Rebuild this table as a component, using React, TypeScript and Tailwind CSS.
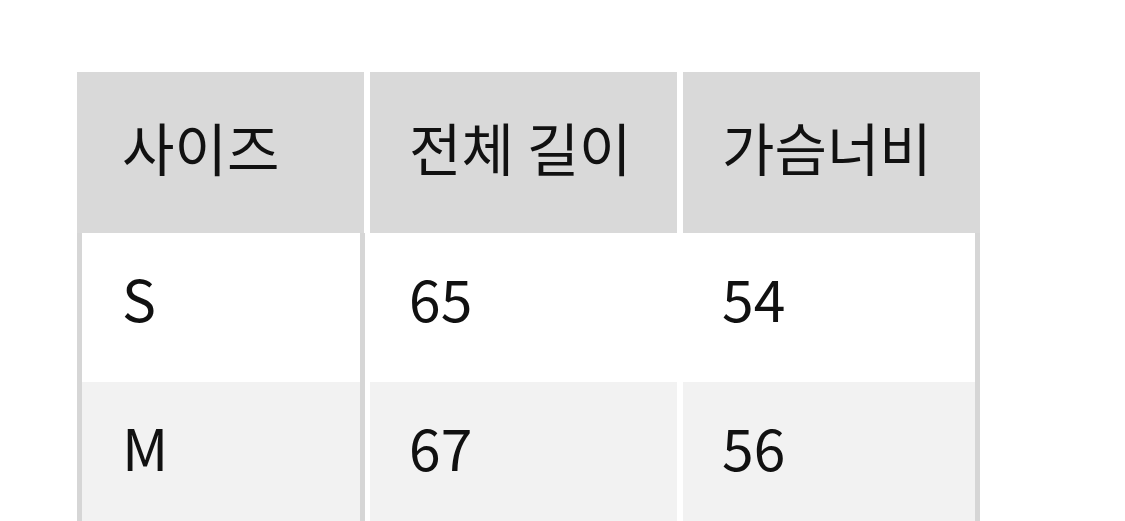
const FONT = "font-['Noto_Sans_CJK_KR','Noto_Sans',sans-serif]"

const rows = [
  { size: "S", length: "65", chest: "54", bg: "bg-white" },
  { size: "M", length: "67", chest: "56", bg: "bg-[#f2f2f2]" },
]

function HeaderRow() {
  return (
    <div className="flex h-[161px] text-[57px] leading-none">
      <div className="flex w-[287px] items-center bg-[#d9d9d9] pb-[12px] pl-[45px]">사이즈</div>
      <div className="w-[6px] bg-white" />
      <div className="flex w-[307px] items-center bg-[#d9d9d9] pb-[12px] pl-[39px]">전체 길이</div>
      <div className="w-[6px] bg-white" />
      <div className="flex w-[297px] items-center bg-[#d9d9d9] pb-[12px] pl-[39px]">가슴너비</div>
    </div>
  )
}

function BodyRow({ size, length, chest, bg }: (typeof rows)[number]) {
  return (
    <div className="flex h-[149px] text-[57px] leading-none">
      <div className="w-[5px] bg-[#d6d6d6]" />
      <div className={`flex w-[278px] items-center pb-[20px] pl-[40px] ${bg}`}>{size}</div>
      <div className="w-[5px] bg-[#d6d6d6]" />
      <div className="w-[5px] bg-white" />
      <div className={`flex w-[307px] items-center pb-[20px] pl-[39px] ${bg}`}>{length}</div>
      <div className="w-[6px] bg-white" />
      <div className={`flex w-[292px] items-center pb-[20px] pl-[39px] ${bg}`}>{chest}</div>
      <div className="w-[5px] bg-[#d6d6d6]" />
    </div>
  )
}

export default function App() {
  return (
    <div className={`h-[521px] w-[1125px] overflow-hidden bg-white pl-[77px] pt-[72px] font-normal text-[#111] ${FONT}`}>
      <div className="flex w-[903px] flex-col">
        <HeaderRow />
        {rows.map((row) => (
          <BodyRow key={row.size} {...row} />
        ))}
      </div>
    </div>
  )
}
